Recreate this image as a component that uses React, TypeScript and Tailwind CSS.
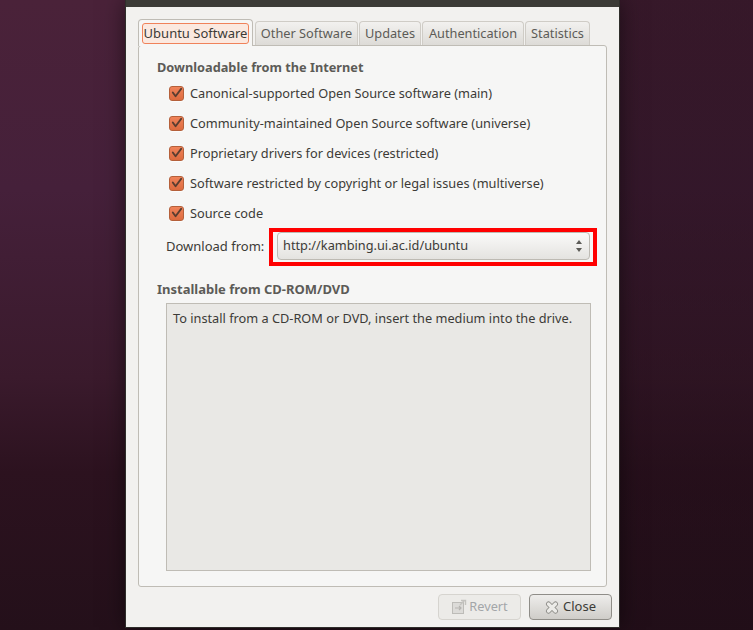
import React from 'react';

const sources = [
  'Canonical-supported Open Source software (main)',
  'Community-maintained Open Source software (universe)',
  'Proprietary drivers for devices (restricted)',
  'Software restricted by copyright or legal issues (multiverse)',
  'Source code',
];

const tabs = [
  { label: 'Other Software', width: 'w-[103px]' },
  { label: 'Updates', width: 'w-[62px]' },
  { label: 'Authentication', width: 'w-[102px]' },
  { label: 'Statistics', width: 'w-[65px]' },
];

function CheckBox() {
  return (
    <span className="mb-[2px] flex h-[15px] w-[15px] items-center justify-center rounded-[3px] border border-[#b5603a] bg-gradient-to-b from-[#f0835a] to-[#dc6a3e] shadow-[0_1px_0_rgba(255,255,255,.7)]">
      <svg viewBox="0 0 14 14" className="h-[14px] w-[14px]" fill="none">
        <path d="M3 6.5 L6 10.5 L12 2.5" stroke="#5a3d30" strokeWidth="2" strokeLinecap="round" strokeLinejoin="round" />
      </svg>
    </span>
  );
}

function RevertIcon() {
  return (
    <svg viewBox="0 0 16 16" className="h-4 w-4" fill="none">
      <rect x="1.5" y="3.5" width="11" height="11" fill="#dcdbd8" stroke="#bdbcb8" />
      <path d="M4 9 H10 M8 7 L10 9 L8 11" stroke="#b5b4b0" strokeWidth="1.2" />
      <path d="M10 1.5 H14.5 V6 M13 2 L9 6" stroke="#c4c3bf" strokeWidth="1.4" />
    </svg>
  );
}

function CloseIcon() {
  return (
    <svg viewBox="0 0 14 13" className="h-[13px] w-[14px]" fill="none" strokeLinecap="round">
      <path d="M3.5 3 L10.5 10 M10.5 3 L3.5 10" stroke="#8a8985" strokeWidth="5" />
      <path d="M3.5 3 L10.5 10 M10.5 3 L3.5 10" stroke="#ecebe8" strokeWidth="3.4" />
    </svg>
  );
}

export default function App() {
  return (
    <div
      className="h-[630px] w-[753px] overflow-hidden bg-[linear-gradient(90deg,rgba(30,12,22,0)_0%,rgba(30,12,22,0)_20%,rgba(30,12,22,0.45)_85%),linear-gradient(180deg,#4a2239_0%,#45203a_30%,#3a1a2c_60%,#2c121f_75%,#24101a_100%)] pl-[126px] text-[13px] text-[#3c3b37]"
      style={{ fontFamily: '"Noto Sans", sans-serif' }}
    >
      <div className="flex h-[627px] w-[493px] flex-col bg-[#f2f1ef] shadow-[0_0_0_1px_#2f2e2b,0_0_22px_rgba(0,0,0,.55)]">
        <div className="h-[7px] bg-[#3c3b37]" />

        <div className="flex flex-1 flex-col pt-3 pl-3">
          {/* notebook tabs */}
          <div className="relative z-10 flex h-[26px] w-[469px] items-end">
            <div className="-mb-px flex h-[27px] w-[115px] items-center justify-center rounded-t-[4px] border border-b-0 border-[#bfbcb5] bg-[#f6f6f5]">
              <span className="flex h-[21px] w-[107px] items-center justify-center rounded-[3px] border border-[#f0825a] bg-[#fbe9e0] leading-none whitespace-nowrap">
                Ubuntu Software
              </span>
            </div>
            <div className="ml-[2px] flex gap-[1px]">
              {tabs.map((t) => (
                <div
                  key={t.label}
                  className={`flex h-[24px] ${t.width} items-center justify-center rounded-t-[4px] border border-b-0 border-[#cfccc6] bg-gradient-to-b from-[#f2f1ef] to-[#dddbd7] text-[12.75px] whitespace-nowrap text-[#5c5b57]`}
                >
                  {t.label}
                </div>
              ))}
            </div>
          </div>

          {/* notebook page */}
          <div className="flex h-[542px] w-[469px] flex-col rounded-[3px] border border-[#bfbcb5] bg-[#f6f6f5] pt-[12px] pl-[18px]">
            <h2 className="h-[18px] text-[12.75px] leading-[18px] font-bold text-[#5c5b57]">
              Downloadable from the Internet
            </h2>

            <div className="mt-[3px] flex flex-col pl-[12px] text-[12.75px]">
              {sources.map((s) => (
                <label key={s} className="flex h-[30px] items-center gap-[6px] whitespace-nowrap">
                  <CheckBox />
                  {s}
                </label>
              ))}
            </div>

            <div className="mt-[-1px] flex items-start pl-[9px]">
              <span className="mt-[4px] h-[28px] w-[103px] leading-[28px] whitespace-nowrap">Download from:</span>
              <div className="border-4 border-[#ff0000] pr-[3px] pb-[2px] pl-[4px]">
                <div className="flex h-[28px] w-[313px] items-center justify-between rounded-[4px] border border-[#bdbab3] bg-gradient-to-b from-[#fafaf9] to-[#e4e3e0] pr-[6px] pl-[5px] text-[12.75px]">
                  <span>http://kambing.ui.ac.id/ubuntu</span>
                  <svg viewBox="0 0 8 14" className="h-[14px] w-2" fill="#5c5b57">
                    <path d="M4 1 L7 5 H1 Z M4 13 L1 9 H7 Z" />
                  </svg>
                </div>
              </div>
            </div>

            <h2 className="mt-[14px] h-[18px] leading-[18px] font-bold text-[#5c5b57]">Installable from CD-ROM/DVD</h2>

            <div className="mt-[5px] ml-[9px] h-[268px] w-[425px] border border-[#bfbcb5] bg-[#e9e8e5] pt-[5px] pl-[6px] text-[12.75px] whitespace-nowrap">
              To install from a CD-ROM or DVD, insert the medium into the drive.
            </div>
          </div>

          {/* action buttons */}
          <div className="mt-[7px] flex w-[474px] justify-end gap-2">
            <button className="flex h-[26px] w-[83px] items-center justify-center gap-[2px] rounded-[4px] border border-[#d6d4cf] bg-[#ecebe8] text-[12.75px] text-[#a3a6a8]">
              <RevertIcon />
              Revert
            </button>
            <button className="flex h-[26px] w-[83px] items-center justify-center gap-1 rounded-[4px] border border-[#8f8d88] bg-gradient-to-b from-[#eeedeb] to-[#cfcdc9]">
              <CloseIcon />
              Close
            </button>
          </div>
        </div>
      </div>
    </div>
  );
}
